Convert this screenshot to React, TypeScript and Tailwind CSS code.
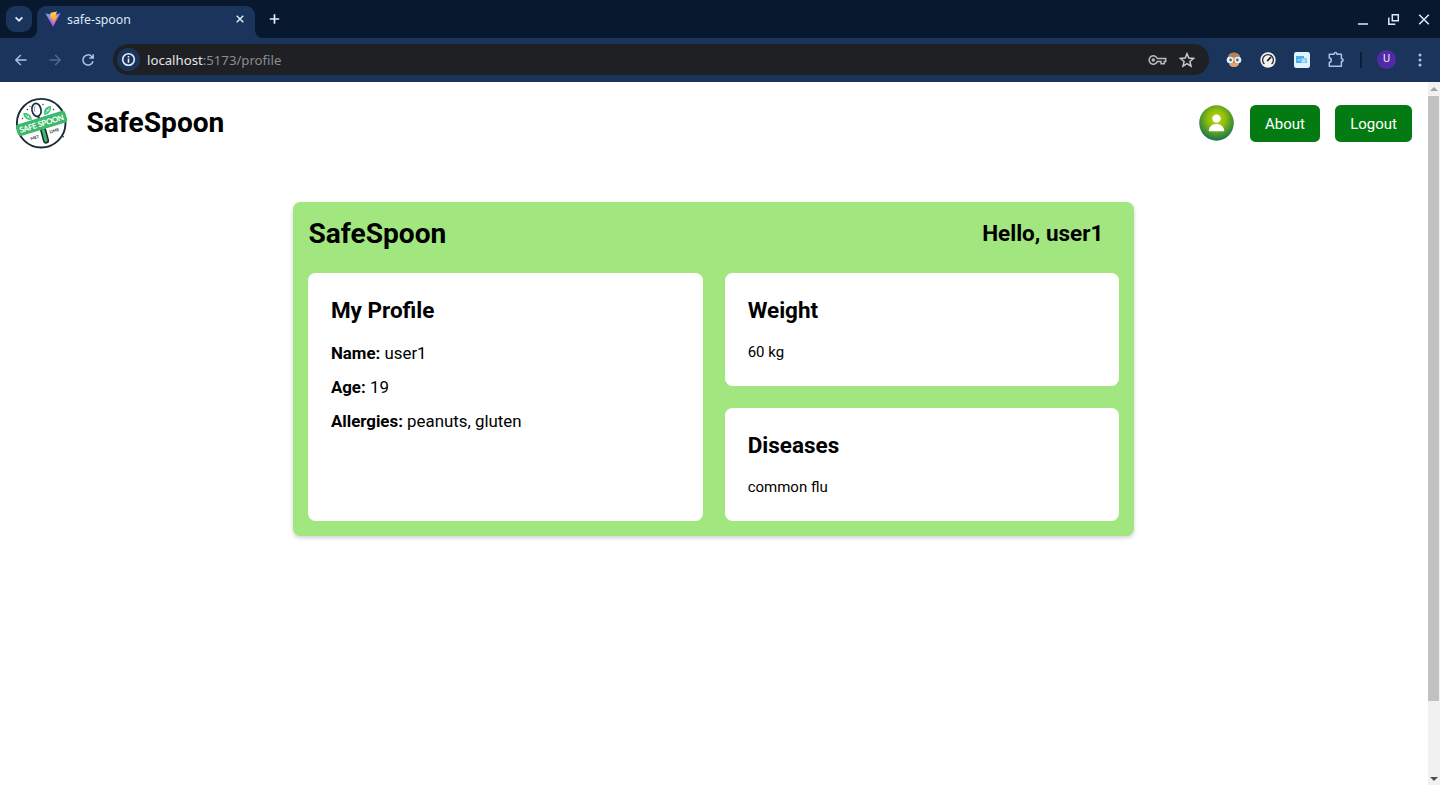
import React from "react";

function Logo() {
  return (
    <svg className="block h-[56px] w-[56px] overflow-visible" viewBox="0 0 56 56" fill="none">
      <circle cx="28.200" cy="28.200" r="24.300" stroke="#1b2a33" strokeWidth="1.900" fill="#fff" />
      <path d="m25.200 21 1.600 6" stroke="#1d2b45" strokeWidth="2.200" />
      <ellipse cx="23.500" cy="14.900" rx="4.500" ry="6.500" transform="rotate(-12 23.500 14.900)" stroke="#1d2b45" strokeWidth="1.700" fill="#fff" />
      <path d="M21.700 16.500c-.8-2.400-.4-4.600 1.100-6.100" stroke="#8d99a8" strokeWidth="1" />
      <path d="m30.300 35.500 2.700 10" stroke="#1b2a33" strokeWidth="6.200" strokeLinecap="round" />
      <path d="m30.300 35.500 2.700 10" stroke="#41b866" strokeWidth="3" strokeLinecap="round" />
      <path d="M19 24.800c-.8-5.200-3.800-7.200-8.700-6.700.3 5 3.600 7.500 8.700 6.700Z" fill="#3fc37c" />
      <path d="m12.300 19.900 5.200 3.900M14 22.700l1.200-1.200m.2-1.200.2 2" stroke="#fff" strokeWidth=".7" />
      <path d="M31.300 20c-1.200-4.800 1-8.300 6.500-9.200.9 5-1.500 8.500-6.500 9.200Z" fill="#3fc37c" />
      <path d="m32.700 18.200 3.800-5.400M33.900 14.500l.5 1.500 2-.6" stroke="#fff" strokeWidth=".7" />
      <g fill="#26333b">
        <circle cx="14.500" cy="14.500" r=".8" />
        <circle cx="17" cy="11.500" r=".6" />
        <circle cx="30" cy="9.500" r=".7" />
        <circle cx="40.500" cy="14.500" r=".7" />
        <circle cx="41.500" cy="19.500" r=".6" />
        <circle cx="9.500" cy="23.500" r=".7" />
        <circle cx="50.300" cy="41.800" r=".8" />
      </g>
      <g transform="rotate(-17 28.500 28.600)">
        <rect x="2.800" y="22.400" width="51.600" height="12.200" rx="3.400" fill="#3eb96c" />
        <text x="5.600" y="31.500" textLength="46" lengthAdjust="spacing" fill="#fff" fontSize="8" fontWeight="700" className="font-['Lato',sans-serif]">SAFE SPOON</text>
        <text x="18" y="41.500" textAnchor="middle" fill="#26333b" fontSize="4.200" fontWeight="700" className="font-['Lato',sans-serif]">MET</text>
        <text x="38.500" y="40.600" textAnchor="middle" fill="#26333b" fontSize="4.200" fontWeight="700" className="font-['Lato',sans-serif]">LIME</text>
      </g>
    </svg>
  );
}

function ViteIcon() {
  return (
    <svg className="block h-4 w-4" viewBox="0 0 16 16">
      <defs>
        <linearGradient id="vite-body" x1="0" y1="0" x2="8" y2="15" gradientUnits="userSpaceOnUse">
          <stop stopColor="#58b8f5" />
          <stop offset="1" stopColor="#c04cf5" />
        </linearGradient>
        <linearGradient id="vite-bolt" x1="8" y1="0" x2="10" y2="10" gradientUnits="userSpaceOnUse">
          <stop stopColor="#ffe04d" />
          <stop offset="1" stopColor="#ff9f1a" />
        </linearGradient>
      </defs>
      <path d="M.5 2.500 8 15.800 15.500 2.300 8 3.700Z" fill="url(#vite-body)" />
      <path d="m12 .6-6.400 1.200L5.200 7.400l2-.3-.5 2.400 1.700-.4L8 13l4.700-8.600-2.300.4Z" fill="url(#vite-bolt)" />
    </svg>
  );
}

function TabStrip() {
  return (
    <div className="flex h-[38px] items-start bg-[#08182f] text-[#dfe8f7]">
      <div className="ml-1.5 mt-1.5 flex h-[26px] w-[26px] items-center justify-center rounded-[9px] bg-[#1a345b]">
        <svg width="10" height="10" viewBox="0 0 10 10" fill="none" stroke="currentColor" strokeWidth="1.700">
          <path d="m1.600 3.300 3.400 3.400 3.400-3.400" />
        </svg>
      </div>
      <div className="relative ml-[5px] mt-1.5 flex h-8 w-[218px] items-center rounded-t-[9px] bg-[#1a345b] pb-[6px] pl-2 pr-2.5">
        <svg className="absolute -left-2 bottom-0" width="8" height="8" viewBox="0 0 8 8">
          <path d="M8 0v8H0a8 8 0 0 0 8-8Z" fill="#1a345b" />
        </svg>
        <svg className="absolute -right-2 bottom-0" width="8" height="8" viewBox="0 0 8 8">
          <path d="M0 0v8h8a8 8 0 0 1-8-8Z" fill="#1a345b" />
        </svg>
        <ViteIcon />
        <span className="ml-1.5 flex-1 pt-px font-['Noto_Sans',sans-serif] text-[12.300px] leading-4">safe-spoon</span>
        <svg width="10" height="10" viewBox="0 0 10 10" stroke="currentColor" strokeWidth="1.500">
          <path d="m1.700 1.700 6.600 6.600m0-6.600L1.700 8.300" />
        </svg>
      </div>
      <svg className="ml-[13px] mt-[13px]" width="13" height="12" viewBox="0 0 13 12" stroke="#e8effa" strokeWidth="1.700">
        <path d="M6.500 1.300v9.400M1.800 6h9.400" />
      </svg>
      <div className="flex-1" />
      <div className="mr-[10px] mt-[13px] flex gap-[18px]">
        <svg width="12" height="13" viewBox="0 0 12 13" stroke="currentColor" strokeWidth="1.500">
          <path d="M1 11h10" />
        </svg>
        <svg width="13" height="13" viewBox="0 0 13 13" fill="none" stroke="currentColor" strokeWidth="1.500">
          <path d="M5.300 1.700h6v6h-6zM1.800 4.500v6.700h6.500" />
        </svg>
        <svg width="12" height="13" viewBox="0 0 12 13" stroke="currentColor" strokeWidth="1.600">
          <path d="m1.200 1.700 9.600 9.600m0-9.600-9.600 9.600" />
        </svg>
      </div>
    </div>
  );
}

function OwlIcon() {
  return (
    <svg width="16" height="16" viewBox="0 0 16 16">
      <path d="M2 7C1.500 3 4.500.8 8 .8S14.500 3 14 7l-1.500 6c-1.500 2.700-7.500 2.700-9 0Z" fill="#e2a574" />
      <path d="M2 6.500C2 2.800 4.500.8 8 .8s6 2 6 5.700L8 5Z" fill="#b58255" />
      <circle cx="4" cy="8" r="3.300" fill="#e6f5f8" />
      <circle cx="12" cy="8" r="3.300" fill="#e6f5f8" />
      <circle cx="4.600" cy="8" r="1.400" fill="#3b7285" />
      <circle cx="11.400" cy="8" r="1.400" fill="#3b7285" />
      <path d="M7 9.500h2L8 12Z" fill="#e5603a" />
    </svg>
  );
}

function Toolbar() {
  return (
    <div className="flex h-11 items-center bg-[#1a345b] pb-px font-['Noto_Sans',sans-serif]">
      <div className="ml-[14px] flex items-center gap-[19.500px] text-[#a9c3ee]">
        <svg width="14" height="14" viewBox="0 0 14 14" fill="none" stroke="currentColor" strokeWidth="1.400">
          <path d="M12.500 7H2m4.800-5L1.800 7l5 5" />
        </svg>
        <svg className="text-[#4e6b99]" width="14" height="14" viewBox="0 0 14 14" fill="none" stroke="currentColor" strokeWidth="1.400">
          <path d="M1.500 7H12M7.200 2l5 5-5 5" />
        </svg>
        <svg width="14" height="14" viewBox="0 0 14 14" fill="none" stroke="currentColor" strokeWidth="1.500">
          <path d="M12 8.200A5.100 5.100 0 1 1 10.700 3.400L12 4.700M12.200 1.300V5.100H8.300" />
        </svg>
      </div>
      <div className="ml-[18px] flex h-[31px] w-[1096px] items-center rounded-full bg-[#1f2023] pl-1 pr-[14px]">
        <span className="flex h-[23px] w-[23px] items-center justify-center rounded-full bg-[#1a345b]">
          <svg width="15" height="15" viewBox="0 0 15 15" fill="none" stroke="#e8eefb" strokeWidth="1.600">
            <circle cx="7.500" cy="7.500" r="5.800" />
            <path d="M7.500 6.600v4.200M7.500 3.900v1.600" />
          </svg>
        </span>
        <span className="ml-[7px] flex-1 text-[13.200px] leading-5 text-[#8b8d91]">
          <span className="text-[#e3e5e9]">localhost</span>:5173/profile
        </span>
        <svg className="mr-[12.500px]" width="19" height="14" viewBox="0 0 19 14" fill="none" stroke="#b7babf" strokeWidth="1.500">
          <path d="M9.300 5.600A4.200 4.200 0 1 0 9.300 8.400H13v2.400h3.300V8.400h1.400V5.600Z" />
          <circle cx="5.300" cy="7" r="1" />
        </svg>
        <svg width="16" height="16" viewBox="0 0 16 16" fill="none" stroke="#c8cbd0" strokeWidth="1.500">
          <path d="m8 1.800 1.800 4.300 4.700.4-3.600 3 1.100 4.600L8 11.700l-4 2.400 1.100-4.600-3.600-3 4.700-.4Z" />
        </svg>
      </div>
      <div className="ml-[17px] flex items-center">
        <OwlIcon />
        <svg className="ml-[18px]" width="16" height="16" viewBox="0 0 16 16" fill="none">
          <circle cx="8" cy="8" r="7.700" fill="#f2f2f0" />
          <path d="M4.400 12a5.400 5.400 0 1 1 7.200 0" stroke="#282a2d" strokeWidth="1.300" />
          <path d="m7.200 9 3.800-4" stroke="#17191b" strokeWidth="1.800" />
        </svg>
        <svg className="ml-[18px]" width="16" height="16" viewBox="0 0 16 16">
          <rect width="16" height="16" rx="2.300" fill="#dff4fc" />
          <path d="M2 4h8v7H2z" fill="#4aaeea" />
          <path d="M7 6h6v5H7z" fill="#7cc9f1" />
          <path d="M3.500 8h3m1.500 0h4M8 9.500h3" stroke="#e9f9ff" strokeWidth=".8" />
        </svg>
        <svg className="ml-[17px]" width="18" height="18" viewBox="0 0 18 18" fill="none" stroke="#a9c3ee" strokeWidth="1.500" strokeLinejoin="round">
          <path d="M2.300 3.300h4.800c-.2-2.300 3-2.300 2.800 0h4.500v4.400c2.300-.2 2.300 3 0 2.800v4.800H2.300v-3.800c2.600-.2 2.600-4.300 0-4.500Z" />
        </svg>
      </div>
      <span className="ml-[15px] h-4 w-[2px] bg-[#0c1d38]" />
      <span className="ml-[15px] flex h-[19px] w-[19px] items-center justify-center rounded-full bg-[#522aa6] font-['Roboto',sans-serif] text-[11px] text-[#eee6ff]">U</span>
      <svg className="ml-[22px]" width="4" height="14" viewBox="0 0 4 14" fill="#a9c3ee">
        <circle cx="2" cy="2" r="1.500" />
        <circle cx="2" cy="7" r="1.500" />
        <circle cx="2" cy="12" r="1.500" />
      </svg>
    </div>
  );
}

function SiteHeader() {
  return (
    <header className="flex h-[82px] items-center pl-[13px] pr-[15.700px]">
      <Logo />
      <h1 className="ml-[17.500px] flex-1 text-[28.125px] font-bold leading-[34px]">SafeSpoon</h1>
      <svg className="mr-4 block" width="35" height="36" viewBox="0 0 35 36">
        <defs>
          <radialGradient id="avatar-fill" cx="50%" cy="38%" r="60%">
            <stop stopColor="#c3db08" />
            <stop offset=".45" stopColor="#8bbb0f" />
            <stop offset="1" stopColor="#19774a" />
          </radialGradient>
        </defs>
        <ellipse cx="17.500" cy="18" rx="17.300" ry="17.700" fill="url(#avatar-fill)" />
        <circle cx="17.500" cy="13.600" r="4.200" fill="#fff" />
        <path d="M9.800 26.200c0-4.500 3.200-7.200 7.700-7.200s7.700 2.700 7.700 7.200Z" fill="#fff" />
      </svg>
      <button className="mr-[15px] mt-px h-[37.500px] w-[70.500px] rounded-[5.600px] bg-[#037b12] pt-px text-[15px] text-white">About</button>
      <button className="mt-px h-[37.500px] w-[76.500px] rounded-[5.600px] bg-[#037b12] pt-px text-[15px] text-white">Logout</button>
    </header>
  );
}

function StatCard({ title, value }: { title: string; value: string }) {
  return (
    <section className="h-[112.500px] rounded-[7.500px] bg-white px-[22.500px] pt-[22px]">
      <h3 className="text-[22.500px] font-bold leading-[30px]">{title}</h3>
      <p className="mt-4 text-[15px] leading-[22.500px]">{value}</p>
    </section>
  );
}

function ProfileRow({ label, value }: { label: string; value: string }) {
  return (
    <p className="text-[16.875px] leading-[26.250px]">
      <strong className="font-bold">{label}:</strong> {value}
    </p>
  );
}

function ProfileCard() {
  return (
    <div className="ml-[293.400px] mt-[38.400px] h-[334px] w-[841px] rounded-[7.500px] bg-[#a2e67f] px-[15px] shadow-[0_2px_4px_rgba(0,0,0,0.18)]">
      <div className="flex h-[71px] items-start justify-between pr-4 pt-[14px]">
        <h2 className="pt-px text-[28.125px] font-bold leading-[34px]">SafeSpoon</h2>
        <p className="pt-0.5 text-[22.500px] font-bold leading-[30px]">Hello, user1</p>
      </div>
      <div className="grid grid-cols-2 gap-[22.500px]">
        <section className="rounded-[7.500px] bg-white px-[22.500px] pt-[22px]">
          <h3 className="text-[22.500px] font-bold leading-[30px]">My Profile</h3>
          <div className="mt-[15px] flex flex-col gap-[7.500px]">
            <ProfileRow label="Name" value="user1" />
            <ProfileRow label="Age" value="19" />
            <ProfileRow label="Allergies" value="peanuts, gluten" />
          </div>
        </section>
        <div className="flex flex-col gap-[22.500px]">
          <StatCard title="Weight" value="60 kg" />
          <StatCard title="Diseases" value="common flu" />
        </div>
      </div>
    </div>
  );
}

function Scrollbar() {
  return (
    <div className="flex w-[12.500px] flex-col items-center bg-[#f1f1f1]">
      <svg className="my-[5px]" width="8" height="4" viewBox="0 0 8 4">
        <path d="m4 0 4 4H0Z" fill="#a3a3a3" />
      </svg>
      <div className="h-[605px] w-[11px] bg-[#c1c1c1]" />
      <div className="flex-1" />
      <svg className="mb-[4px]" width="8" height="4" viewBox="0 0 8 4">
        <path d="m4 4 4-4H0Z" fill="#505050" />
      </svg>
    </div>
  );
}

export default function App() {
  return (
    <div className="flex h-[785px] w-[1440px] flex-col overflow-hidden bg-white">
      <TabStrip />
      <Toolbar />
      <div className="flex min-h-0 flex-1">
        <main className="flex-1 bg-white font-['Roboto',sans-serif] text-black">
          <SiteHeader />
          <ProfileCard />
        </main>
        <Scrollbar />
      </div>
    </div>
  );
}
